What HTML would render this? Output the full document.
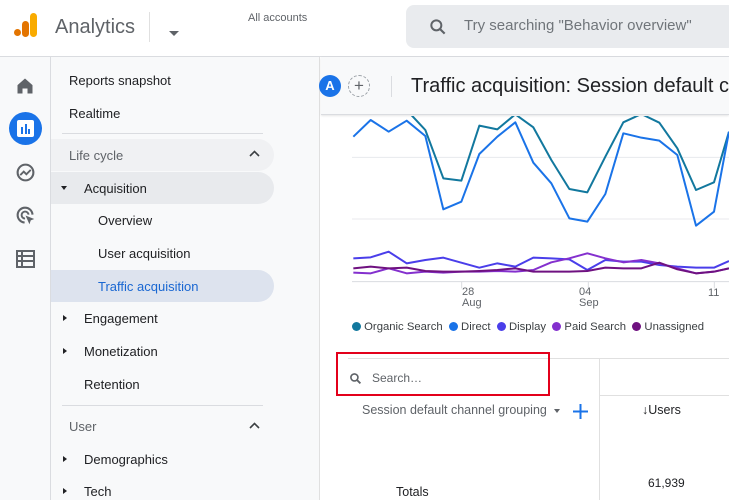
<!DOCTYPE html>
<html><head><meta charset="utf-8"><style>
*{margin:0;padding:0;box-sizing:border-box}
body{width:729px;height:500px;overflow:hidden;position:relative;background:#fff;font-family:"Liberation Sans",Arial,sans-serif;color:#202124}
.a{position:absolute;white-space:nowrap}
.nav{font-size:13px;color:#202124}
.tri{position:absolute;width:0;height:0;border-top:3.5px solid transparent;border-bottom:3.5px solid transparent;border-left:4px solid #202124}
.dn{position:absolute;width:0;height:0;border-left:3.5px solid transparent;border-right:3.5px solid transparent;border-top:4px solid #202124}
</style></head><body>
<!-- top bar -->
<div class="a" style="left:0;top:0;width:729px;height:57px;border-bottom:1px solid #dadce0;background:#fff"></div>
<div class="a" style="left:14px;top:29px;width:7px;height:7px;border-radius:50%;background:#e37400"></div>
<div class="a" style="left:22px;top:21px;width:7px;height:16px;border-radius:3.5px;background:#e37400"></div>
<div class="a" style="left:30px;top:13px;width:7px;height:24px;border-radius:3.5px;background:#f9ab00"></div>
<div class="a" style="left:55px;top:16px;font-size:20px;color:#5f6368">Analytics</div>
<div class="a" style="left:149px;top:12px;width:1px;height:30px;background:#e0e0e0"></div>
<div class="dn" style="left:169px;top:31px;border-top-color:#5f6368;border-left-width:5px;border-right-width:5px;border-top-width:5px"></div>
<div class="a" style="left:248px;top:12px;font-size:11px;color:#5f6368">All accounts</div>
<div class="a" style="left:406px;top:5px;width:330px;height:43px;border-radius:8px;background:#e9ebee"></div>
<svg class="a" style="left:428px;top:17px" width="20" height="20" viewBox="0 0 24 24"><circle cx="10" cy="10" r="6" fill="none" stroke="#5f6368" stroke-width="2.4"/><path d="M14.5 14.5L20 20" stroke="#5f6368" stroke-width="2.6"/></svg>
<div class="a" style="left:464px;top:17px;font-size:15px;color:#70757a">Try searching "Behavior overview"</div>
<!-- left rail -->
<div class="a" style="left:0;top:57px;width:51px;height:443px;background:#f8f9fa;border-right:1px solid #dadce0"></div>
<svg class="a" style="left:15px;top:76px" width="20" height="20" viewBox="0 0 24 24"><path d="M3 11L12 3l9 8v10h-6v-6h-6v6H3z" fill="#5f6368"/></svg>
<div class="a" style="left:9px;top:112px;width:33px;height:33px;border-radius:50%;background:#1a73e8"></div>
<div class="a" style="left:17px;top:120px;width:17px;height:17px;border-radius:2px;background:#fff"></div>
<div class="a" style="left:21px;top:127px;width:2px;height:7px;background:#1a73e8"></div>
<div class="a" style="left:24.5px;top:124px;width:2px;height:10px;background:#1a73e8"></div>
<div class="a" style="left:28px;top:129px;width:2px;height:5px;background:#1a73e8"></div>
<svg class="a" style="left:15px;top:162px" width="21" height="21" viewBox="0 0 24 24"><circle cx="12" cy="12" r="9" fill="none" stroke="#5f6368" stroke-width="2.4"/><path d="M6 15l4-4 3 3 5-5" fill="none" stroke="#5f6368" stroke-width="2.2"/></svg>
<svg class="a" style="left:15px;top:205px" width="21" height="21" viewBox="0 0 24 24"><path d="M20 11a8.5 8.5 0 1 0-9 9" fill="none" stroke="#5f6368" stroke-width="2.4"/><path d="M15.5 11a4 4 0 1 0-4 4.5" fill="none" stroke="#5f6368" stroke-width="2.2"/><path d="M12 12l10 4-4 1.5L16.5 22z" fill="#5f6368"/></svg>
<svg class="a" style="left:16px;top:250px" width="19" height="18" viewBox="0 0 19 18"><rect x="1" y="1" width="17" height="16" fill="none" stroke="#5f6368" stroke-width="2"/><path d="M1 6h17M1 11h17M6 1v16" stroke="#5f6368" stroke-width="2"/></svg>
<!-- sidebar -->
<div class="a" style="left:51px;top:57px;width:269px;height:443px;background:#f8f9fa;border-right:1px solid #e0e0e0"></div>
<div class="a nav" style="left:69px;top:73px">Reports snapshot</div>
<div class="a nav" style="left:69px;top:106px">Realtime</div>
<div class="a" style="left:62px;top:133px;width:201px;height:1px;background:#dadce0"></div>
<div class="a" style="left:51px;top:139px;width:223px;height:32px;border-radius:0 16px 16px 0;background:#f0f1f3"></div>
<div class="a nav" style="left:69px;top:148px;color:#5f6368">Life cycle</div>
<svg class="a" style="left:249px;top:150px" width="11" height="8" viewBox="0 0 11 8"><path d="M1 6l4.5-4.5L10 6" fill="none" stroke="#3c4043" stroke-width="1.6"/></svg>
<div class="a" style="left:51px;top:172px;width:223px;height:32px;border-radius:0 16px 16px 0;background:#e8eaed"></div>
<div class="dn" style="left:61px;top:186px"></div>
<div class="a nav" style="left:84px;top:181px">Acquisition</div>
<div class="a nav" style="left:98px;top:213px">Overview</div>
<div class="a nav" style="left:98px;top:246px">User acquisition</div>
<div class="a" style="left:51px;top:270px;width:223px;height:32px;border-radius:0 16px 16px 0;background:#dde3ee"></div>
<div class="a nav" style="left:98px;top:279px;color:#1967d2">Traffic acquisition</div>
<div class="tri" style="left:63px;top:315px"></div>
<div class="a nav" style="left:84px;top:311px">Engagement</div>
<div class="tri" style="left:63px;top:348px"></div>
<div class="a nav" style="left:84px;top:344px">Monetization</div>
<div class="a nav" style="left:84px;top:377px">Retention</div>
<div class="a" style="left:62px;top:405px;width:201px;height:1px;background:#dadce0"></div>
<div class="a nav" style="left:69px;top:419px;color:#5f6368">User</div>
<svg class="a" style="left:249px;top:422px" width="11" height="8" viewBox="0 0 11 8"><path d="M1 6l4.5-4.5L10 6" fill="none" stroke="#3c4043" stroke-width="1.6"/></svg>
<div class="tri" style="left:63px;top:456px"></div>
<div class="a nav" style="left:84px;top:452px">Demographics</div>
<div class="tri" style="left:63px;top:488px"></div>
<div class="a nav" style="left:84px;top:484px">Tech</div>
<!-- content header -->
<div class="a" style="left:321px;top:57px;width:408px;height:58px;background:#f8f9fa;border-bottom:1px solid #dadce0;box-shadow:0 1px 2px rgba(0,0,0,0.1)"></div>
<div class="a" style="left:319px;top:75px;width:22px;height:22px;border-radius:50%;background:#1a73e8;color:#fff;font-size:13px;font-weight:bold;text-align:center;line-height:22px">A</div>
<div class="a" style="left:348px;top:75px;width:22px;height:22px;border-radius:50%;border:1px dashed #9aa0a6;color:#5f6368;font-size:17px;text-align:center;line-height:19px">+</div>
<div class="a" style="left:391px;top:76px;width:1px;height:21px;background:#dadce0"></div>
<div class="a" style="left:411px;top:75px;font-size:20px;color:#202124">Traffic acquisition: Session default c</div>
<!-- chart -->
<svg class="a" style="left:320px;top:100px" width="409" height="240" viewBox="0 0 1227 720">
<defs><clipPath id="c"><rect x="96" y="48" width="1131" height="600"/></clipPath></defs>
<path d="M96 172H1227M96 357H1227" stroke="#e8eaed" stroke-width="3"/>
<path d="M96 545H1227" stroke="#dadce0" stroke-width="3"/>
<path d="M425 545v20M805 545v20M1183 545v20" stroke="#dadce0" stroke-width="3"/>
<g clip-path="url(#c)" fill="none" stroke-width="6" stroke-linejoin="round">
<polyline stroke="#12789e" points="100,45 152,30 206,45 260,30 316,90 370,235 424,242 478,77 532,88 586,43 640,82 694,180 748,267 802,277 856,170 910,67 964,42 1018,68 1072,145 1128,270 1182,247 1227,95"/>
<polyline stroke="#1a73e8" points="100,110 152,60 206,95 260,62 316,108 370,328 424,305 478,162 532,110 586,67 640,188 694,250 748,355 802,365 856,282 910,100 964,113 1018,122 1072,165 1128,377 1182,335 1227,95"/>
<polyline stroke="#4a3eea" points="100,475 152,472 206,455 260,490 316,480 370,473 424,488 478,503 532,490 586,500 640,473 694,475 748,478 802,510 856,480 910,485 964,485 1018,495 1072,500 1128,503 1182,503 1227,483"/>
<polyline stroke="#8430ce" points="100,518 152,520 206,505 260,520 316,515 370,518 424,515 478,515 532,513 586,515 640,510 694,487 748,475 802,460 856,475 910,487 964,480 1018,490 1072,505 1128,520 1182,515 1227,505"/>
<polyline stroke="#6f1180" points="100,505 152,500 206,505 260,503 316,513 370,515 424,515 478,513 532,510 586,505 640,515 694,515 748,515 802,513 856,503 910,505 964,505 1018,488 1072,508 1128,520 1182,515 1227,505"/>
</g>
</svg>
<div class="a" style="left:462px;top:287px;font-size:11px;color:#5f6368;line-height:11px">28<br>Aug</div>
<div class="a" style="left:579px;top:287px;font-size:11px;color:#5f6368;line-height:11px">04<br>Sep</div>
<div class="a" style="left:708px;top:287px;font-size:11px;color:#5f6368">11</div>
<div class="a" style="left:352px;top:321px;font-size:11.3px;color:#3c4043;line-height:12px">
<span style="display:inline-block;width:9px;height:9px;border-radius:50%;background:#12789e;vertical-align:-1px"></span> Organic Search&nbsp;
<span style="display:inline-block;width:9px;height:9px;border-radius:50%;background:#1a73e8;vertical-align:-1px"></span> Direct&nbsp;
<span style="display:inline-block;width:9px;height:9px;border-radius:50%;background:#4a3eea;vertical-align:-1px"></span> Display&nbsp;
<span style="display:inline-block;width:9px;height:9px;border-radius:50%;background:#8430ce;vertical-align:-1px"></span> Paid Search&nbsp;
<span style="display:inline-block;width:9px;height:9px;border-radius:50%;background:#6f1180;vertical-align:-1px"></span> Unassigned</div>
<!-- table -->
<div class="a" style="left:348px;top:358px;width:381px;height:1px;background:#e0e0e0"></div>
<div class="a" style="left:599px;top:358px;width:1px;height:142px;background:#e0e0e0"></div>
<div class="a" style="left:599px;top:395px;width:130px;height:1px;background:#e0e0e0"></div>
<div class="a" style="left:336px;top:352px;width:214px;height:44px;border:2px solid #e3001b"></div>
<svg class="a" style="left:349px;top:372px" width="13" height="13" viewBox="0 0 24 24"><circle cx="10" cy="10" r="6.5" fill="none" stroke="#5f6368" stroke-width="3"/><path d="M15 15l6 6" stroke="#5f6368" stroke-width="3.5"/></svg>
<div class="a" style="left:372px;top:371px;font-size:12px;color:#5f6368">Search…</div>
<div class="a" style="left:362px;top:403px;font-size:12.5px;color:#5f6368">Session default channel grouping</div>
<div class="dn" style="left:554px;top:409px;border-top-color:#5f6368"></div>
<svg class="a" style="left:572px;top:403px" width="17" height="17" viewBox="0 0 17 17"><path d="M8.5 1v15M1 8.5h15" stroke="#1a73e8" stroke-width="2"/></svg>
<div class="a" style="left:642px;top:403px;font-size:12.5px;color:#202124">↓Users</div>
<div class="a" style="left:648px;top:476px;font-size:12px;color:#202124">61,939</div>
<div class="a" style="left:396px;top:485px;font-size:12.5px;color:#202124">Totals</div>
</body></html>
